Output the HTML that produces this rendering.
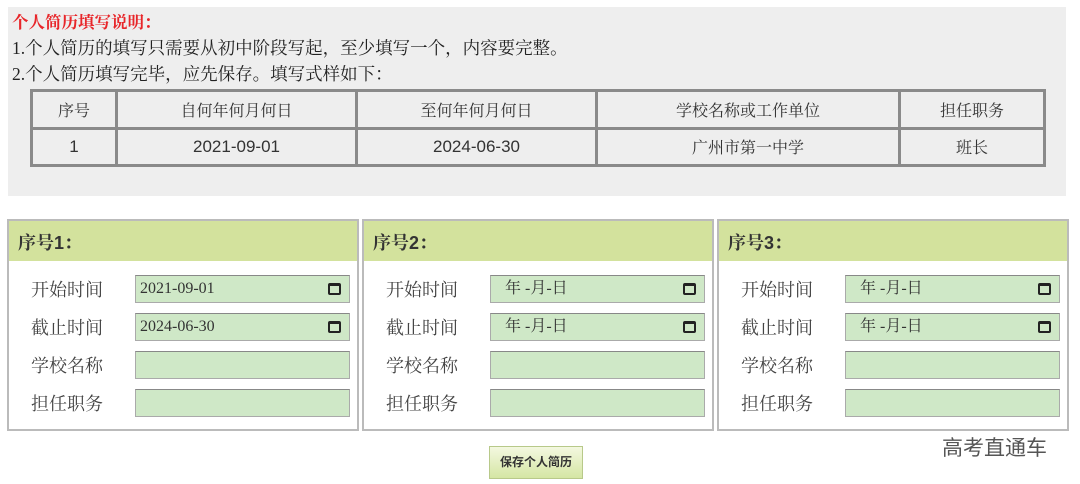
<!DOCTYPE html>
<html><head><meta charset="utf-8"><style>
*{margin:0;padding:0;box-sizing:border-box}
body{width:1080px;height:484px;background:#fff;position:relative;overflow:hidden;font-family:"Liberation Serif","Noto Serif CJK SC",serif;color:#222}
.gray{position:absolute;left:8px;top:7px;width:1058px;height:189px;background:#eeeeee}
.t{position:absolute;left:12px;font-size:17.5px;line-height:20px;white-space:nowrap}
.red{color:#e8262a;top:13px;font-weight:bold;font-size:16.5px}
table{position:absolute;left:30px;top:89px;width:1016px;height:78px;border-collapse:collapse;border:2px solid #888}
td{border:3px solid #8a8a8a;text-align:center;font-size:16px;color:#333}
td.s{font-family:"Liberation Sans",sans-serif;font-size:17px}
.p{position:absolute;top:219px;width:352px;height:212px;border:2px solid #bbb;background:#fff}
.h{height:40px;background:#d3e29d;font-size:18px;font-weight:bold;padding:8px 0 0 9px;color:#333}
.h b{font-family:"Liberation Sans",sans-serif}
.r{position:absolute;left:22px;font-size:18px;color:#444}
.i{position:absolute;left:126px;width:215px;height:28px;background:#cfe8c7;border:1px solid #aaa;border-top-color:#888;font-size:16px;line-height:26px;padding:0 0 0 4px;color:#333}
.cal{position:absolute;right:8px;top:7px;width:13px;height:12px;border:2px solid #222;border-top-width:3px;border-radius:2px}
.btn{position:absolute;left:489px;top:446px;width:94px;height:33px;border:1px solid #b8c98a;background:linear-gradient(#f4f8e0,#d5e6a4);font-size:12px;font-weight:bold;text-align:center;line-height:31px;font-family:"Liberation Sans","Noto Sans CJK SC",sans-serif;color:#333}
.wm{position:absolute;left:942px;top:432px;font-size:21px;color:#555;font-family:"Liberation Sans","Noto Sans CJK SC",sans-serif}
</style></head><body>
<div class="gray"></div>
<div class="t red">个人简历填写说明：</div>
<div class="t" style="top:38px">1.个人简历的填写只需要从初中阶段写起，至少填写一个，内容要完整。</div>
<div class="t" style="top:64px">2.个人简历填写完毕，应先保存。填写式样如下：</div>
<table>
<tr><td style="width:85px">序号</td><td style="width:240px">自何年何月何日</td><td style="width:240px">至何年何月何日</td><td style="width:303px">学校名称或工作单位</td><td>担任职务</td></tr>
<tr><td class="s">1</td><td class="s">2021-09-01</td><td class="s">2024-06-30</td><td>广州市第一中学</td><td>班长</td></tr>
</table>

<div class="p" style="left:7px">
<div class="h">序号<b>1</b>：</div>
<div class="r" style="top:55px">开始时间</div><div class="i" style="top:54px">2021-09-01<span class="cal"></span></div>
<div class="r" style="top:93px">截止时间</div><div class="i" style="top:92px">2024-06-30<span class="cal"></span></div>
<div class="r" style="top:131px">学校名称</div><div class="i" style="top:130px"></div>
<div class="r" style="top:169px">担任职务</div><div class="i" style="top:168px"></div>
</div>
<div class="p" style="left:362px">
<div class="h">序号<b>2</b>：</div>
<div class="r" style="top:55px">开始时间</div><div class="i" style="top:54px;padding-left:14px">年 -月-日<span class="cal"></span></div>
<div class="r" style="top:93px">截止时间</div><div class="i" style="top:92px;padding-left:14px">年 -月-日<span class="cal"></span></div>
<div class="r" style="top:131px">学校名称</div><div class="i" style="top:130px"></div>
<div class="r" style="top:169px">担任职务</div><div class="i" style="top:168px"></div>
</div>
<div class="p" style="left:717px">
<div class="h">序号<b>3</b>：</div>
<div class="r" style="top:55px">开始时间</div><div class="i" style="top:54px;padding-left:14px">年 -月-日<span class="cal"></span></div>
<div class="r" style="top:93px">截止时间</div><div class="i" style="top:92px;padding-left:14px">年 -月-日<span class="cal"></span></div>
<div class="r" style="top:131px">学校名称</div><div class="i" style="top:130px"></div>
<div class="r" style="top:169px">担任职务</div><div class="i" style="top:168px"></div>
</div>
<div class="btn">保存个人简历</div>
<div class="wm">高考直通车</div>
</body></html>
